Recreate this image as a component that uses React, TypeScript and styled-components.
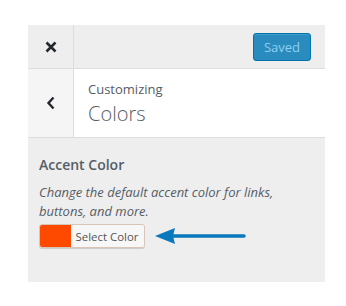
import React from "react";
import styled, { createGlobalStyle } from "styled-components";

const Global = createGlobalStyle`
  html, body { margin: 0; padding: 0; background: #fff; }
  body { font-family: "Open Sans", "Noto Sans", sans-serif; }
`;

const Page = styled.div`
  padding: 25px 0 0 28px;
`;

const Panel = styled.div`
  width: 297px;
  background: #eee;
`;

const Header = styled.div`
  display: flex;
  align-items: center;
  height: 43px;
  border-bottom: 1px solid #ddd;
  background: #eee;
`;

const IconCell = styled.div<{ $bg?: string; $h: number }>`
  width: 45px;
  height: ${(p) => p.$h}px;
  display: flex;
  align-items: center;
  justify-content: center;
  border-right: 1px solid #ddd;
  background: ${(p) => p.$bg ?? "#eee"};
  color: #23282d;
  flex-shrink: 0;
`;

const Spacer = styled.div`
  flex: 1;
`;

const SavedButton = styled.button`
  margin-right: 14px;
  width: 58px;
  height: 28px;
  padding: 0;
  border: 1px solid #0073aa;
  border-radius: 3px;
  background: #2a8bbf;
  color: #8fd0ee;
  font-family: "Open Sans", sans-serif;
  font-size: 13px;
  box-shadow: inset 0 1px 0 rgba(120, 200, 230, 0.3);
`;

const TitleRow = styled.div`
  display: flex;
  height: 68px;
  border-bottom: 1px solid #ddd;
  background: #fff;
`;

const TitleText = styled.div`
  display: flex;
  flex-direction: column;
  padding: 9px 0 0 14px;
  color: #555d66;
`;

const Small = styled.span`
  font-size: 13px;
  line-height: 22px;
`;

const Big = styled.span`
  font-size: 20px;
  font-weight: 300;
  line-height: 28px;
`;

const Content = styled.div`
  padding: 17px 11px 0 11px;
  height: 127px;
`;

const Label = styled.div`
  font-size: 14px;
  font-weight: 600;
  color: #555d66;
  line-height: 20px;
  margin-bottom: 8px;
`;

const Desc = styled.div`
  font-size: 13px;
  font-style: italic;
  color: #555d66;
  line-height: 19px;
  margin-bottom: 3px;
`;

const PickerRow = styled.div`
  display: flex;
  align-items: center;
  gap: 10px;
`;

const Picker = styled.div`
  display: flex;
  height: 22px;
  border: 1px solid #d9c4b8;
  border-radius: 3px;
  overflow: hidden;
  box-shadow: 0 1px 0 #ccc;
`;

const Swatch = styled.div<{ $color: string }>`
  width: 31px;
  background: ${(p) => p.$color};
`;

const PickerLabel = styled.div`
  display: flex;
  align-items: center;
  justify-content: center;
  width: 73px;
  box-sizing: border-box;
  padding: 0 1px 0 0;
  background: #f7f7f7;
  font-size: 11.4px;
  color: #555;
  white-space: nowrap;
`;

export default function App() {
  return (
    <>
      <Global />
      <Page>
        <Panel>
          <Header>
            <IconCell $h={43}>
              <svg width="12" height="12" viewBox="0 0 12 12">
                <path d="M1.5 1.5 L10.5 10.5 M10.5 1.5 L1.5 10.5" stroke="#23282d" strokeWidth="2.6" />
              </svg>
            </IconCell>
            <Spacer />
            <SavedButton>Saved</SavedButton>
          </Header>
          <TitleRow>
            <IconCell $h={68} $bg="#f5f5f5">
              <svg width="10" height="14" viewBox="0 0 10 14">
                <path d="M7.5 1.5 L2.5 7 L7.5 12.5" stroke="#23282d" strokeWidth="2.4" fill="none" />
              </svg>
            </IconCell>
            <TitleText>
              <Small>Customizing</Small>
              <Big>Colors</Big>
            </TitleText>
          </TitleRow>
          <Content>
            <Label>Accent Color</Label>
            <Desc>
              Change the default accent color for links,
              <br />
              buttons, and more.
            </Desc>
            <PickerRow>
              <Picker>
                <Swatch $color="#fe4a00" />
                <PickerLabel>Select Color</PickerLabel>
              </Picker>
              <svg width="92" height="18" viewBox="0 0 92 18">
                <path d="M0 9 L20 1 L18 9 L20 17 Z" fill="#0a78bd" />
                <path d="M17 9 L89 9" stroke="#0a78bd" strokeWidth="3.5" strokeLinecap="round" />
              </svg>
            </PickerRow>
          </Content>
        </Panel>
      </Page>
    </>
  );
}
